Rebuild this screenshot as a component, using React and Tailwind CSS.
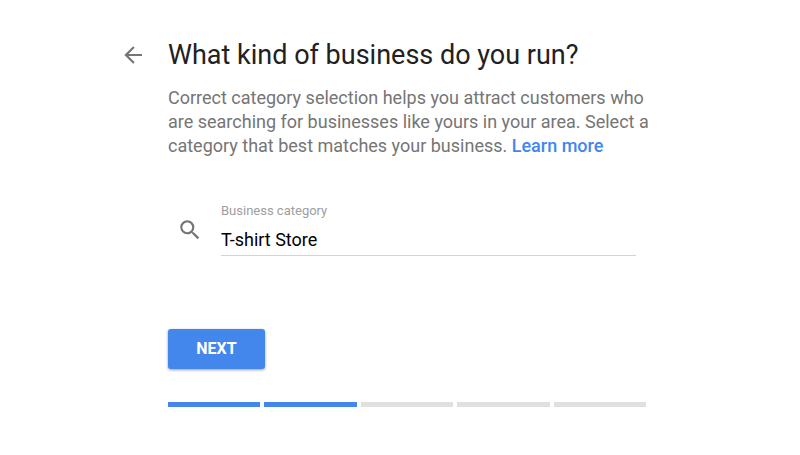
import React from "react";

const steps = [true, true, false, false, false];

export default function App() {
  return (
    <main className="min-h-screen bg-white px-6 pt-9 font-['Roboto',sans-serif]">
      <div className="mx-auto flex w-full max-w-[560px] items-start">
        <button type="button" aria-label="Back" className="mt-1.5 w-12 shrink-0">
          <svg viewBox="0 0 24 24" className="size-[26px]" fill="#757575" aria-hidden="true">
            <path d="M20.3 11.1H7.83l5.7-5.7L12.2 4l-8.2 8 8.2 8 1.33-1.41-5.7-5.69H20.3v-1.8z" />
          </svg>
        </button>
        <div className="min-w-0 flex-1">
          <h1 className="text-[27px] leading-[38px] text-[#212121]">What kind of business do you run?</h1>
          <p className="mt-3 max-w-[490px] text-[18px] leading-6 text-[#757575]">
            Correct category selection helps you attract customers who are searching for businesses like yours in your area. Select a category that best matches your business.{" "}
            <a href="#learn" className="font-medium text-[#4285f4]">Learn more</a>
          </p>
          <form onSubmit={(e) => e.preventDefault()}>
            <div className="mt-[45px] flex pr-[44px] pl-[9px]">
              <svg viewBox="0 0 24 24" className="mt-3.5 mr-[18px] size-[26px] shrink-0" fill="#757575" aria-hidden="true">
                <path d="M15.5 14h-.79l-.28-.27A6.47 6.47 0 0 0 16 9.5 6.5 6.5 0 1 0 9.5 16c1.61 0 3.09-.59 4.23-1.57l.27.28v.79l5 4.99L20.49 19l-4.99-5zm-6 0C7.01 14 5 11.99 5 9.5S7.01 5 9.5 5 14 7.01 14 9.5 11.99 14 9.5 14z" />
              </svg>
              <div className="min-w-0 flex-1">
                <label htmlFor="category" className="block text-[13px] leading-4 text-[#9e9e9e]">Business category</label>
                <input id="category" defaultValue="T-shirt Store" className="block h-[37px] w-full border-b border-[#d4d4d4] pt-1 text-[18px] text-black outline-none" />
              </div>
            </div>
            <button type="submit" className="mt-[73px] block h-10 w-[97px] rounded-[3px] bg-[#4387ed] text-[16px] font-bold text-white shadow-[0_1px_3px_rgba(0,0,0,0.4)]">NEXT</button>
          </form>
          <div className="mt-[33px] mr-[34px] flex gap-1" role="progressbar" aria-label="Step 2 of 5" aria-valuenow={2} aria-valuemin={0} aria-valuemax={5}>
            {steps.map((done, i) => (
              <span key={i} className={done ? "h-[5px] flex-1 bg-[#4387ed]" : "h-[5px] flex-1 bg-[#e0e0e0]"} />
            ))}
          </div>
        </div>
      </div>
    </main>
  );
}
